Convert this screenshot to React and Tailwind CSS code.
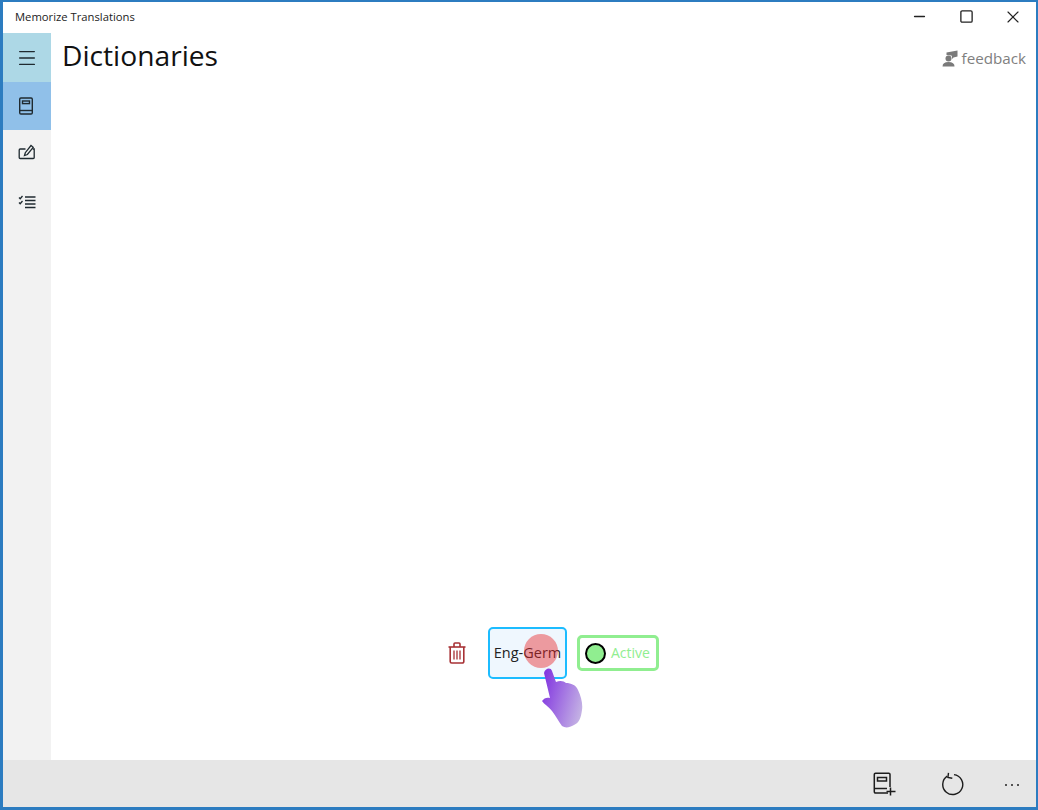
import { Minus, Square, X, Menu } from 'lucide-react'

function BookIcon() {
  return (
    <svg width="16" height="18" viewBox="0 0 16 18" fill="none" stroke="#1f2a30" strokeWidth="1.4">
      <rect x="1.7" y="1" width="12.6" height="16" rx="1.2" />
      <path d="M1.7 13.5h12.6" />
      <rect x="4.5" y="4" width="7" height="2.6" />
    </svg>
  )
}

function EditIcon() {
  return (
    <svg width="18" height="16" viewBox="0 0 18 16" fill="none" stroke="#1f2a30" strokeWidth="1.3">
      <path d="M7.500 5H2.200a1 1 0 0 0-1 1v7.500a1 1 0 0 0 1 1h13a1 1 0 0 0 1-1V5h-1.500" />
      <path d="M6.500 11.500l.8-2.800L13 1.500l2.200 1.800-5.800 7.200z" />
    </svg>
  )
}

function ChecklistIcon() {
  return (
    <svg width="18" height="14" viewBox="0 0 18 14" fill="none" stroke="#1f2a30" strokeWidth="1.3">
      <path d="M1 2.500l1.200 1.200L4.500 1M1 7.500l1.200 1.200L4.500 6" />
      <path d="M7 2h10.500M7 5.500h10.500M7 9h10.500M7 12.500h10.500" />
    </svg>
  )
}

function FeedbackIcon() {
  return (
    <svg width="16" height="17" viewBox="0 0 16 17" fill="#7a7a7a">
      <circle cx="6.500" cy="8.500" r="3" />
      <path d="M0.500 16.500c0-3 2-4.500 6-4.500s6 1.500 6 4.500z" />
      <path d="M4.500 2.500L15.500 0.500v6L11.500 7.500 10 9V6.800L9.500 5.500 4.500 5z" />
    </svg>
  )
}

function TrashIcon() {
  return (
    <svg width="18" height="22" viewBox="0 0 18 22" fill="none" stroke="#a83236" strokeWidth="1.6">
      <path d="M0.500 5h17" />
      <path d="M6 5V2a1 1 0 0 1 1-1h4a1 1 0 0 1 1 1v3" />
      <path d="M2.200 5v14.500a1.500 1.500 0 0 0 1.500 1.500h10.600a1.500 1.500 0 0 0 1.500-1.500V5" />
      <path d="M6 8.500v9M9 8.500v9M12 8.500v9" strokeWidth="1.300" />
    </svg>
  )
}

function AddBookIcon() {
  return (
    <svg width="24" height="24" viewBox="0 0 24 24" fill="none" stroke="#1c1c1c" strokeWidth="1.5">
      <path d="M16 21H3.500a1.200 1.200 0 0 1-1.200-1.200V2.500a1.200 1.200 0 0 1 1.200-1.200h13.300a1.200 1.200 0 0 1 1.200 1.200V15" />
      <path d="M2.300 16.500H15" />
      <rect x="5.500" y="5.500" width="9" height="3.500" />
      <path d="M18.500 15.500v8M14.500 19.500h9" />
    </svg>
  )
}

function RefreshIcon() {
  return (
    <svg width="24" height="24" viewBox="0 0 24 24" fill="none" stroke="#1c1c1c" strokeWidth="1.4">
      <path d="M7.200 4.200A10 10 0 1 0 14 2.600" />
      <path d="M8.500 0.800l-.6 4.600 4.400.8" />
    </svg>
  )
}

function HandIcon() {
  return (
    <svg className="absolute left-[94px] top-[41px]" width="42" height="60" viewBox="0 0 42 60">
      <defs>
        <linearGradient id="hand" x1="0" y1="0.3" x2="1" y2="0.7">
          <stop offset="0" stopColor="#8338e0" />
          <stop offset="1" stopColor="#c4b2e4" />
        </linearGradient>
      </defs>
      <path
        d="M3 5C4 0 10-1 11 3L15 14C19 12 23 13 25 15C30 15 35 17 37 22C40 28 42 36 41 42C40 50 38 55 33 57C28 60 24 60 21 58C18 54 15 48 11 43C7 38 3 36 1 33C3 30 6 29 9 30Z"
        fill="url(#hand)"
      />
    </svg>
  )
}

export default function App() {
  return (
    <div
      className="relative w-[1038px] h-[810px] overflow-hidden flex flex-col bg-white border-l-[3px] border-r-2 border-t-[2px] border-b-[3px] border-[#2c7cc0] text-[#111]"
      style={{ fontFamily: '"Open Sans", "Noto Sans", sans-serif' }}
    >
      {/* title bar */}
      <div className="h-[31px] shrink-0 flex items-center justify-between">
        <span className="pl-3 pb-px text-[11.25px] text-[#222]">Memorize Translations</span>
        <div className="flex items-center pb-[2px] text-[#222]">
          <button className="w-[46px] flex justify-center pr-[3px]"><Minus size={17} strokeWidth={1.8} /></button>
          <button className="w-[46px] flex justify-center pr-px"><Square size={15} strokeWidth={2.1} /></button>
          <button className="w-[46px] flex justify-center"><X size={20} strokeWidth={1.4} /></button>
        </div>
      </div>

      <div className="flex-1 flex min-h-0">
        {/* nav rail */}
        <nav className="w-12 shrink-0 bg-[#f2f2f2] flex flex-col">
          <div className="h-[49px] bg-[#add8e6] flex items-center justify-center">
            <Menu size={22} strokeWidth={1.5} color="#1f2a30" />
          </div>
          <div className="h-12 bg-[#90c0e9] flex items-center justify-center pr-[2px]"><BookIcon /></div>
          <div className="h-12 flex items-center justify-center pb-1"><EditIcon /></div>
          <div className="h-12 flex items-center justify-center"><ChecklistIcon /></div>
        </nav>

        {/* page */}
        <main className="flex-1 flex flex-col min-w-0">
          <div className="flex justify-between items-start">
            <h1 className="pl-[11px] pt-[1px] text-[28.2px] leading-[42px] text-[#111]">Dictionaries</h1>
            <div className="flex items-end gap-[4px] pr-[10px] pt-[13px] text-[#808080]">
              <FeedbackIcon />
              <span className="text-[15.2px] leading-[24px] -mb-[3px]">feedback</span>
            </div>
          </div>

          <div className="flex-1 flex items-end pb-[81px] pl-[396px]">
            <div className="relative flex items-center">
              <div className="w-5 flex justify-center"><TrashIcon /></div>
              <div className="ml-[21px] w-[79px] h-[52px] rounded-[5px] border-2 border-[#1cbcff] bg-[#eff7fe] flex items-center justify-center text-[14.5px] text-[#222]">
                Eng-Germ
              </div>
              <div className="ml-[10px] w-[82px] h-9 rounded-[5px] border-[3px] border-[#90ee90] flex items-center gap-[5px] pl-[5px] text-sm text-[#90ee90]">
                <span className="w-[21px] h-[21px] rounded-full bg-[#90ee90] border-2 border-black shrink-0" />
                Active
              </div>
              {/* tap indicator */}
              <span className="absolute left-[77px] top-[7px] w-[34px] h-[34px] rounded-full bg-[#e8282c]/45" />
              <HandIcon />
            </div>
          </div>
        </main>
      </div>

      {/* command bar */}
      <div className="h-[47px] shrink-0 bg-[#e6e6e6] flex items-center justify-end">
        <button className="w-[68px] flex justify-center"><AddBookIcon /></button>
        <button className="w-[68px] flex justify-center"><RefreshIcon /></button>
        <button className="w-[50px] flex justify-center gap-[4px] pt-[2px] pl-[2px]">
          <span className="w-[2px] h-[2px] bg-[#222] rounded-full" />
          <span className="w-[2px] h-[2px] bg-[#222] rounded-full" />
          <span className="w-[2px] h-[2px] bg-[#222] rounded-full" />
        </button>
      </div>
    </div>
  )
}
